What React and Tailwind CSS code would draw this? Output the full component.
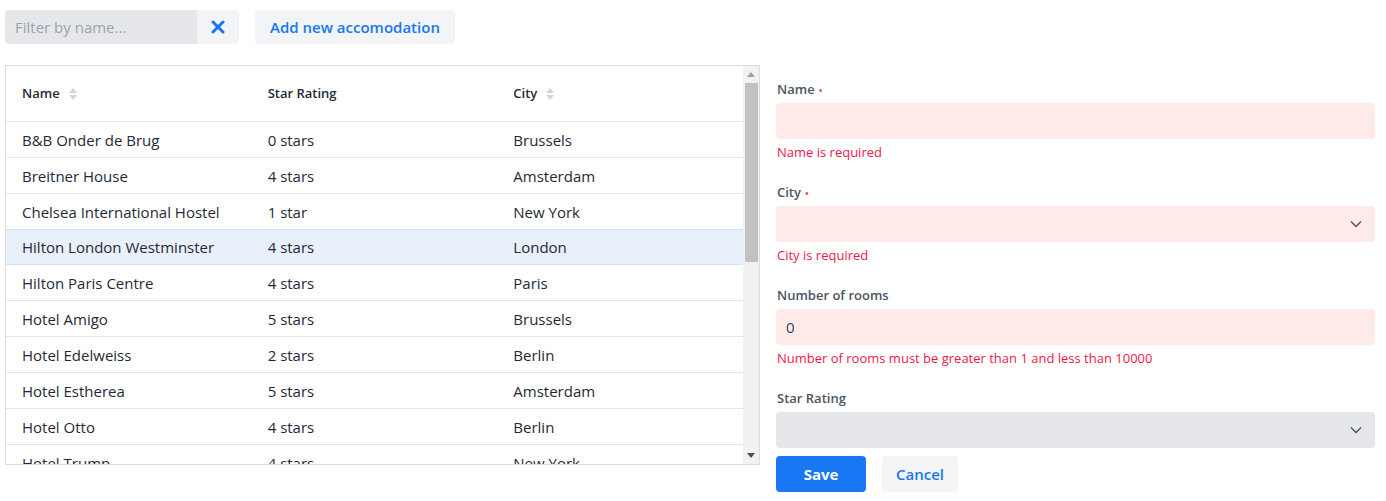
import React from "react";

const ROWS = [
  ["B&B Onder de Brug", "0 stars", "Brussels"],
  ["Breitner House", "4 stars", "Amsterdam"],
  ["Chelsea International Hostel", "1 star", "New York"],
  ["Hilton London Westminster", "4 stars", "London"],
  ["Hilton Paris Centre", "4 stars", "Paris"],
  ["Hotel Amigo", "5 stars", "Brussels"],
  ["Hotel Edelweiss", "2 stars", "Berlin"],
  ["Hotel Estherea", "5 stars", "Amsterdam"],
  ["Hotel Otto", "4 stars", "Berlin"],
  ["Hotel Trump", "4 stars", "New York"],
];

const SortIcon = () => (
  <svg width="10" height="16" viewBox="0 0 10 16" className="ml-2">
    <path d="M5 2 L9 7 H1 Z" fill="#d1d5db" />
    <path d="M5 14 L9 9 H1 Z" fill="#d1d5db" />
  </svg>
);

const Chevron = () => (
  <svg width="14" height="14" viewBox="0 0 14 14" fill="none">
    <path d="M2 4.5 L7 9.5 L12 4.5" stroke="#4b5563" strokeWidth="1.4" />
  </svg>
);

const Label = ({ children, required }) => (
  <label className="text-[13px] font-semibold text-[#4b5563] leading-5 h-[24px] pl-px">
    {children}
    {required && <span className="ml-1 text-[10px] text-[#ef4444]">•</span>}
  </label>
);

const Field = ({ label, required, error, children }) => (
  <div className="flex flex-col">
    <Label required={required}>{label}</Label>
    {children}
    <div className="h-[43px] pt-[3px] pl-px text-[13px] text-[#f0174b] leading-5">{error}</div>
  </div>
);

const App = () => {
  return (
    <div className="w-[1386px] h-[501px] bg-white pt-[10px] px-[5px] text-[#1f2937]" style={{ fontFamily: '"Open Sans", "Noto Sans", sans-serif' }}>
      <div className="flex items-center">
        <input
          placeholder="Filter by name..."
          className="w-[192px] h-[34px] rounded-l bg-[#e5e7eb] px-[10px] text-[15px] placeholder:text-[#9ca3af] outline-none"
        />
        <button className="w-[42px] h-[34px] rounded-r bg-[#f3f4f6] flex items-center justify-center">
          <svg width="14" height="14" viewBox="0 0 14 14">
            <path d="M2 2 L12 12 M12 2 L2 12" stroke="#1877f2" strokeWidth="3" strokeLinecap="round" />
          </svg>
        </button>
        <button className="ml-4 h-[34px] w-[200px] rounded bg-[#f3f4f6] text-[15px] font-semibold text-[#1877f2]">
          Add new accomodation
        </button>
      </div>

      <div className="flex mt-[21px] gap-[16px]">
        <div className="w-[755px] h-[400px] border border-[#dcdcdc] flex overflow-hidden">
          <div className="flex-1 overflow-hidden">
            <div className="grid grid-cols-3 h-[56px] items-center border-b border-[#e5e7eb] text-[13px] font-semibold">
              <div className="flex items-center pl-4">Name<SortIcon /></div>
              <div className="flex items-center pl-4">Star Rating</div>
              <div className="flex items-center pl-4">City<SortIcon /></div>
            </div>
            {ROWS.map((r, i) => (
              <div
                key={r[0]}
                className={
                  i === 3
                    ? "grid grid-cols-3 h-[36px] items-center pt-px border-b border-[#d3e0f3] bg-[#e8f0fb] text-[15px] -mt-px border-t"
                    : "grid grid-cols-3 h-[36px] items-center pt-px border-b border-[#e5e7eb] text-[15px]"
                }
              >
                <div className="pl-4 whitespace-nowrap">{r[0]}</div>
                <div className="pl-4">{r[1]}</div>
                <div className="pl-4">{r[2]}</div>
              </div>
            ))}
          </div>
          <div className="w-[16px] bg-[#f1f1f1] flex flex-col items-center">
            <div className="h-[17px] flex items-center justify-center">
              <svg width="8" height="5" viewBox="0 0 8 5"><path d="M4 0 L8 5 H0 Z" fill="#a3a3a3" /></svg>
            </div>
            <div className="w-[13px] h-[179px] bg-[#c1c1c1]" />
            <div className="flex-1" />
            <div className="h-[17px] flex items-center justify-center">
              <svg width="8" height="5" viewBox="0 0 8 5"><path d="M0 0 H8 L4 5 Z" fill="#505050" /></svg>
            </div>
          </div>
        </div>

        <div className="w-[599px] flex flex-col pt-[14px]">
          <Field label="Name" required error="Name is required">
            <div className="h-[36px] rounded bg-[#ffe9e9]" />
          </Field>
          <Field label="City" required error="City is required">
            <div className="h-[36px] rounded bg-[#ffe9e9] flex items-center justify-end pr-[12px]">
              <Chevron />
            </div>
          </Field>
          <Field label="Number of rooms" error="Number of rooms must be greater than 1 and less than 10000">
            <div className="h-[36px] rounded bg-[#ffe9e9] flex items-center px-[10px] text-[15px] text-[#374151]">0</div>
          </Field>
          <div className="flex flex-col">
            <Label>Star Rating</Label>
            <div className="h-[36px] rounded bg-[#e5e7eb] flex items-center justify-end pr-[12px]">
              <Chevron />
            </div>
          </div>
          <div className="flex gap-4 mt-[8px]">
            <button className="w-[90px] h-[36px] rounded bg-[#1877f2] text-white text-[15px] font-bold">Save</button>
            <button className="w-[76px] h-[36px] rounded bg-[#f3f4f6] text-[#1877f2] text-[15px] font-semibold">Cancel</button>
          </div>
        </div>
      </div>
    </div>
  );
};

export default App;
